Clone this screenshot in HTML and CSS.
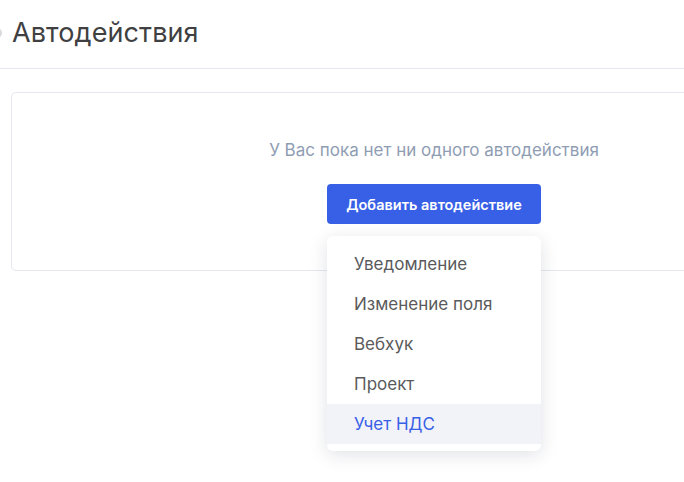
FILE: index.html
```html
<!DOCTYPE html>
<html lang="ru">
<head>
  <meta charset="UTF-8" />
  <title>Автодействия</title>
  <link rel="stylesheet" href="styles.css">
</head>
<body>

<div class="page">
  <div class="page-header">
    <span class="header-icon"></span>
    <h1>Автодействия</h1>
  </div>

  <div class="card">
    <p class="empty-text">У Вас пока нет ни одного автодействия</p>
    <div class="add-wrap">
      <button class="add-btn">Добавить автодействие</button>
      <ul class="menu">
        <li>Уведомление</li>
        <li>Изменение поля</li>
        <li>Вебхук</li>
        <li>Проект</li>
        <li class="active">Учет НДС</li>
      </ul>
    </div>
  </div>
</div>

</body>
</html>
```

FILE: styles.css
```css
* { box-sizing: border-box; }
body {
  margin: 0;
  font-family: Inter, "Noto Sans", sans-serif;
  background: #fff;
}
.page {
  width: 684px;
  height: 482px;
  overflow: hidden;
}
.page-header {
  display: flex;
  align-items: center;
  width: 870px;
  height: 69px;
  border-bottom: 1px solid #e6e7f0;
  padding-bottom: 3px;
}
.header-icon {
  width: 10px;
  height: 10px;
  border-radius: 50%;
  background: #d9dadf;
  margin-left: -8px;
  margin-right: 10px;
  flex-shrink: 0;
}
h1 {
  margin: 0;
  font-size: 27px;
  font-weight: 400;
  color: #404042;
  letter-spacing: 0.1px;
}
.card {
  margin: 23px 0 0 11px;
  width: 846px;
  height: 179px;
  border: 1px solid #e6e7f0;
  border-radius: 5px;
  display: flex;
  flex-direction: column;
  align-items: center;
  padding-top: 47px;
}
.empty-text {
  margin: 0;
  font-size: 17px;
  color: #8f9db3;
  line-height: 20px;
}
.add-wrap {
  position: relative;
  margin-top: 24px;
}
.add-btn {
  width: 214px;
  height: 40px;
  background: #3860e6;
  color: #fff;
  border: none;
  border-radius: 4px;
  font-family: inherit;
  font-size: 14.5px;
  font-weight: 600;
  cursor: pointer;
}
.menu {
  position: absolute;
  top: 52px;
  left: 0;
  width: 214px;
  margin: 0;
  padding: 8px 0 7px;
  list-style: none;
  background: #fff;
  border-radius: 6px;
  box-shadow: 0 4px 18px rgba(20, 30, 60, 0.13);
  z-index: 2;
}
.menu li {
  height: 40px;
  line-height: 40px;
  padding-left: 27px;
  font-size: 17px;
  color: #5a5a5c;
}
.menu li.active {
  background: #f2f3f9;
  color: #3860e6;
}
```
